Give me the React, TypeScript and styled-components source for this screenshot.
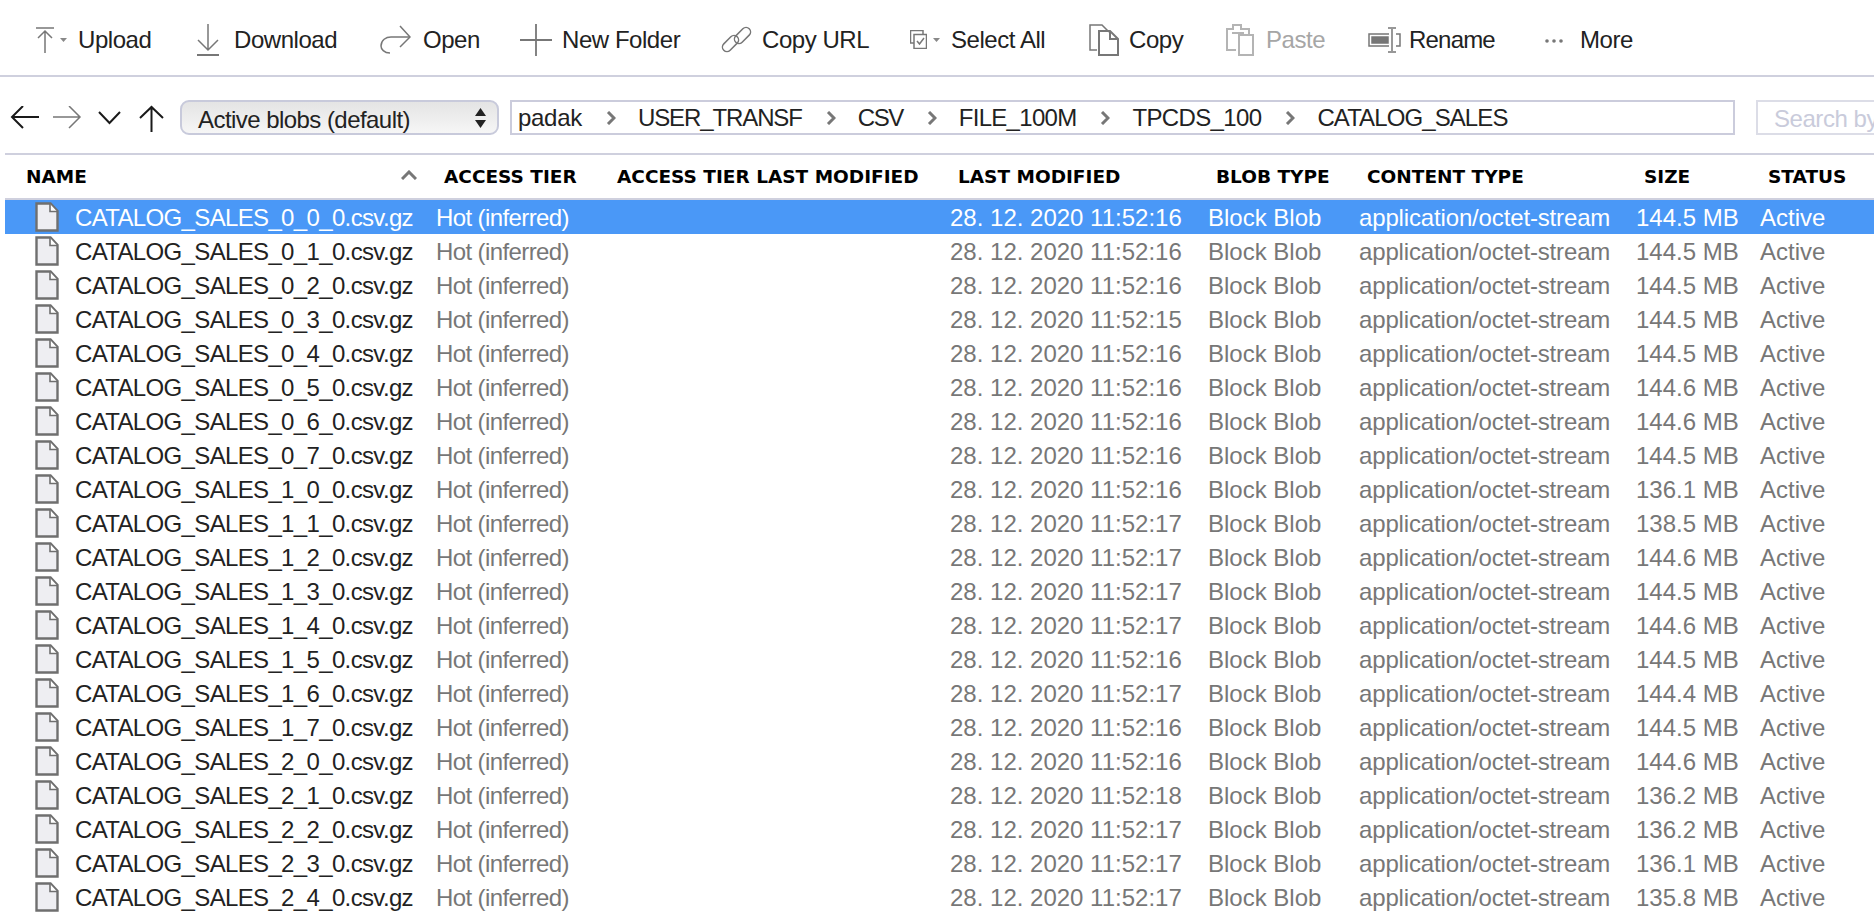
import React from 'react';
import styled, { createGlobalStyle } from 'styled-components';

const FONT = '"Liberation Sans", Arial, sans-serif';

const GlobalStyle = createGlobalStyle`
  html, body {
    margin: 0;
    padding: 0;
    height: 100%;
    overflow: hidden;
    background: #fff;
    font-family: ${FONT};
  }
`;

const Page = styled.div`
  width: 1874px;
  height: 914px;
  overflow: hidden;
  background: #fff;
  color: #222;
`;

const Toolbar = styled.div`
  height: 77px;
  box-sizing: border-box;
  padding: 4px 0 0 36px;
  display: flex;
  align-items: center;
  border-bottom: 2px solid #cfd0de;
`;

const Tool = styled.div<{ $width: number; $spacing?: number; $disabled?: boolean }>`
  flex: none;
  width: ${(p) => p.$width}px;
  display: flex;
  align-items: center;
  font-size: 24px;
  letter-spacing: ${(p) => p.$spacing ?? -0.45}px;
  white-space: nowrap;
  color: ${(p) => (p.$disabled ? '#a6a6a6' : '#222')};
`;

const IconSlot = styled.span<{ $width: number }>`
  flex: none;
  width: ${(p) => p.$width}px;
  height: 34px;
  display: flex;
  align-items: center;
`;

const NavRow = styled.div`
  height: 76px;
  box-sizing: border-box;
  padding: 23px 0 0 10px;
  display: flex;
  align-items: flex-start;
`;

const NavIcons = styled.div`
  flex: none;
  width: 170px;
  height: 35px;
  display: flex;
  align-items: center;
  gap: 14px;
`;

const BlobSelect = styled.div`
  flex: none;
  width: 319px;
  height: 35px;
  box-sizing: border-box;
  border: 2px solid #c8cadb;
  border-radius: 9px;
  background: linear-gradient(#e4e4e4, #f6f6f6);
  padding: 4px 11px 0 16px;
  display: flex;
  align-items: center;
  justify-content: space-between;
  font-size: 24px;
  letter-spacing: -0.55px;
  white-space: nowrap;
`;

const SelectCaret = styled.svg`
  display: block;
  flex: none;
  margin-top: -4px;
`;

const PathBar = styled.div`
  flex: none;
  width: 1225px;
  height: 35px;
  margin-left: 11px;
  box-sizing: border-box;
  border: 2px solid #cbccdc;
  padding: 1px 0 0 6px;
  display: flex;
  align-items: center;
  font-size: 24px;
  white-space: nowrap;
`;

const Crumb = styled.span<{ $spacing: number }>`
  letter-spacing: ${(p) => p.$spacing}px;
`;

const Chevron = styled.svg`
  flex: none;
  margin: 0 22px 0 24px;
  filter: blur(0.4px);
`;

const SearchBox = styled.div`
  flex: none;
  width: 160px;
  height: 35px;
  margin-left: 21px;
  box-sizing: border-box;
  border: 2px solid #dcdde7;
  padding: 2px 0 0 16px;
  display: flex;
  align-items: center;
  font-size: 24px;
  letter-spacing: -0.45px;
  color: #c9cbdb;
  white-space: nowrap;
`;

const Table = styled.div`
  margin-left: 5px;
`;

const COLUMNS = '423px 173px 341px 258px 151px 277px 124px 1fr';

const HeaderRow = styled.div`
  display: grid;
  grid-template-columns: ${COLUMNS};
  height: 47px;
  box-sizing: border-box;
  border-top: 2px solid #cfd0de;
  border-bottom: 2px solid #cfd0de;
  align-items: center;
`;

const HeaderCell = styled.div`
  padding-left: 16px;
  font-family: "DejaVu Sans", Verdana, sans-serif;
  font-weight: 700;
  font-size: 18.5px;
  color: #000;
  white-space: nowrap;
  position: relative;
  &:first-child {
    padding-left: 21px;
  }
`;

const SortCaret = styled.svg`
  position: absolute;
  left: 396px;
  top: 4px;
  filter: blur(0.4px);
`;

const Row = styled.div<{ $selected?: boolean }>`
  display: grid;
  grid-template-columns: ${COLUMNS};
  height: 34px;
  align-items: center;
  font-size: 24px;
  color: ${(p) => (p.$selected ? '#fff' : '#777')};
  background: ${(p) => (p.$selected ? '#4a98f7' : 'transparent')};
`;

const Cell = styled.div<{ $spacing?: number }>`
  padding: 2px 0 0 8px;
  white-space: nowrap;
  letter-spacing: ${(p) => p.$spacing ?? 0}px;
`;

const NameCell = styled.div<{ $selected?: boolean }>`
  display: flex;
  align-items: center;
  gap: 16px;
  padding-left: 30px;
  white-space: nowrap;
  letter-spacing: -0.65px;
  color: ${(p) => (p.$selected ? '#fff' : '#222')};
`;

const FileName = styled.span`
  padding-top: 2px;
`;

const Stroke = styled.svg`
  display: block;
  flex: none;
  fill: none;
  stroke: #777;
  stroke-width: 1.5;
`;

const DarkStroke = styled(Stroke)`
  stroke: #1a1a1a;
  stroke-width: 2;
`;

const FaintStroke = styled(Stroke)`
  stroke: #b4b4b4;
  stroke-width: 2;
`;

const MiniArrow = styled.svg`
  display: block;
  flex: none;
  margin-left: 6px;
  fill: #888;
`;

const PlainSvg = styled.svg`
  display: block;
  flex: none;
`;

const Dropdown = () => (
  <MiniArrow width="7" height="4" viewBox="0 0 7 4">
    <path d="M0 0h7L3.500 4z" />
  </MiniArrow>
);

const UploadIcon = () => (
  <>
    <Stroke width="18" height="26" viewBox="0 0 18 26">
      <path d="M0 1h18M9 26V4M2 11l7-7 7 7" />
    </Stroke>
    <Dropdown />
  </>
);

const DownloadIcon = () => (
  <Stroke width="22" height="32" viewBox="0 0 22 32">
    <path d="M11 0v26M1 16l10 10 10-10" />
    <path d="M0 31h22" strokeWidth="2" />
  </Stroke>
);

const OpenIcon = () => (
  <Stroke width="31" height="29" viewBox="0 0 31 29">
    <path d="M10 28C4 28 1 24 1 21c0-6 5-9 10-9h19" />
    <path d="M20 1l10 11-10 10" />
  </Stroke>
);

const PlusIcon = () => (
  <Stroke width="32" height="32" viewBox="0 0 32 32">
    <path d="M16 0v32M0 16h32" strokeWidth="1.800" />
  </Stroke>
);

const LinkIcon = () => (
  <Stroke width="31" height="31" viewBox="0 0 31 31">
    <rect x="12" y="7" width="19" height="9" rx="4.500" transform="rotate(-45 21.500 11.500)" />
    <rect x="0" y="15" width="19" height="9" rx="4.500" transform="rotate(-45 9.500 19.500)" />
  </Stroke>
);

const SelectAllIcon = () => (
  <>
    <Stroke width="17" height="19" viewBox="0 0 17 19" strokeWidth="1.100">
      <path d="M4 13H.5V.5H13V4" />
      <path d="M4 4.500h12.500v14H4z" />
      <path d="M7 11l2.500 3L14 8" />
    </Stroke>
    <Dropdown />
  </>
);

const CopyIcon = () => (
  <Stroke width="30" height="32" viewBox="0 0 30 32">
    <path d="M8 26H1V1h12l7 7" />
    <path d="M10 7h11l8 8v16H10zM21 7v8h8" strokeWidth="2" />
  </Stroke>
);

const PasteIcon = () => (
  <FaintStroke width="28" height="32" viewBox="0 0 28 32">
    <path d="M10 26H1V5h6V1h8v4h8v5" />
    <path d="M13 11h14v20H13z" />
    <path d="M6 9h12" />
  </FaintStroke>
);

const RenameIcon = () => (
  <Stroke width="33" height="26" viewBox="0 0 33 26">
    <path d="M21 7H1v12h20M28 7h4v12h-4" />
    <path d="M4 10h16v6H4z" fill="#777" />
    <path d="M24 2v22M20 1h8M20 25h8" />
  </Stroke>
);

const MoreIcon = () => (
  <PlainSvg width="18" height="6" viewBox="0 0 18 6" fill="#777">
    <circle cx="2" cy="4" r="1.800" />
    <circle cx="9" cy="4" r="1.800" />
    <circle cx="16" cy="4" r="1.800" />
  </PlainSvg>
);

const FileIcon = () => (
  <PlainSvg width="24" height="30" viewBox="0 0 24 30">
    <path
      d="M1.500 1.500h14l7 7.500v19.500h-21z"
      fill="#eeeef2"
      stroke="#6f6f6f"
      strokeWidth="2.400"
    />
    <path d="M15 2v7.500h7" fill="#fff" stroke="#6f6f6f" strokeWidth="1.600" />
  </PlainSvg>
);

const tools: {
  label: string;
  icon: React.ReactNode;
  slot: number;
  width: number;
  spacing?: number;
  disabled?: boolean;
}[] = [
  { label: 'Upload', icon: <UploadIcon />, slot: 42, width: 161 },
  { label: 'Download', icon: <DownloadIcon />, slot: 37, width: 183 },
  { label: 'Open', icon: <OpenIcon />, slot: 43, width: 140 },
  { label: 'New Folder', icon: <PlusIcon />, slot: 42, width: 201 },
  { label: 'Copy URL', icon: <LinkIcon />, slot: 41, width: 189 },
  { label: 'Select All', icon: <SelectAllIcon />, slot: 41, width: 179 },
  { label: 'Copy', icon: <CopyIcon />, slot: 40, width: 137 },
  { label: 'Paste', icon: <PasteIcon />, slot: 40, width: 142, disabled: true },
  { label: 'Rename', icon: <RenameIcon />, slot: 41, width: 177, spacing: -0.8 },
  { label: 'More', icon: <MoreIcon />, slot: 35, width: 60 },
];

const crumbs = [
  { label: 'padak', spacing: -0.3 },
  { label: 'USER_TRANSF', spacing: -1.1 },
  { label: 'CSV', spacing: -1.5 },
  { label: 'FILE_100M', spacing: -0.7 },
  { label: 'TPCDS_100', spacing: -0.65 },
  { label: 'CATALOG_SALES', spacing: -0.9 },
];

const headers = [
  'NAME',
  'ACCESS TIER',
  'ACCESS TIER LAST MODIFIED',
  'LAST MODIFIED',
  'BLOB TYPE',
  'CONTENT TYPE',
  'SIZE',
  'STATUS',
];

const files: [string, string, string][] = [
  ['0_0_0', '16', '144.5'],
  ['0_1_0', '16', '144.5'],
  ['0_2_0', '16', '144.5'],
  ['0_3_0', '15', '144.5'],
  ['0_4_0', '16', '144.5'],
  ['0_5_0', '16', '144.6'],
  ['0_6_0', '16', '144.6'],
  ['0_7_0', '16', '144.5'],
  ['1_0_0', '16', '136.1'],
  ['1_1_0', '17', '138.5'],
  ['1_2_0', '17', '144.6'],
  ['1_3_0', '17', '144.5'],
  ['1_4_0', '17', '144.6'],
  ['1_5_0', '16', '144.5'],
  ['1_6_0', '17', '144.4'],
  ['1_7_0', '16', '144.5'],
  ['2_0_0', '16', '144.6'],
  ['2_1_0', '18', '136.2'],
  ['2_2_0', '17', '136.2'],
  ['2_3_0', '17', '136.1'],
  ['2_4_0', '17', '135.8'],
];

export default function App() {
  return (
    <Page>
      <GlobalStyle />
      <Toolbar>
        {tools.map((t) => (
          <Tool key={t.label} $width={t.width} $spacing={t.spacing} $disabled={t.disabled}>
            <IconSlot $width={t.slot}>{t.icon}</IconSlot>
            {t.label}
          </Tool>
        ))}
      </Toolbar>
      <NavRow>
        <NavIcons>
          <DarkStroke width="29" height="24" viewBox="0 1 29 24">
            <path d="M29 12H2M13 1L2 12l11 11" />
          </DarkStroke>
          <Stroke width="29" height="24" viewBox="0 1 29 24" strokeWidth="2">
            <path d="M0 12h27M16 1l11 11-11 11" />
          </Stroke>
          <DarkStroke width="26" height="14" viewBox="-2 0 26 14" strokeWidth="1.600">
            <path d="M1 1l10.500 11L22 1" />
          </DarkStroke>
          <DarkStroke width="28" height="29" viewBox="-3 0 28 29">
            <path d="M12.500 29V4M1 15L12.500 4 24 15" />
          </DarkStroke>
        </NavIcons>
        <BlobSelect>
          Active blobs (default)
          <SelectCaret width="11" height="20" viewBox="0 0 11 20" fill="#222">
            <path d="M5.500 0L11 8H0zM0 12h11l-5.500 8z" />
          </SelectCaret>
        </BlobSelect>
        <PathBar>
          {crumbs.map((c, i) => (
            <React.Fragment key={c.label}>
              <Crumb $spacing={c.spacing}>{c.label}</Crumb>
              {i < crumbs.length - 1 && (
                <Chevron width="10" height="14" viewBox="0 0 10 14" fill="none" stroke="#777" strokeWidth="3">
                  <path d="M2 1l6 6-6 6" />
                </Chevron>
              )}
            </React.Fragment>
          ))}
        </PathBar>
        <SearchBox>Search by</SearchBox>
      </NavRow>
      <Table>
        <HeaderRow>
          {headers.map((h, i) => (
            <HeaderCell key={h}>
              {h}
              {i === 0 && (
                <SortCaret width="16" height="10" viewBox="0 0 16 10" fill="none" stroke="#777" strokeWidth="3">
                  <path d="M1 9l7-7 7 7" />
                </SortCaret>
              )}
            </HeaderCell>
          ))}
        </HeaderRow>
        {files.map(([part, sec, size], i) => (
          <Row key={part} $selected={i === 0}>
            <NameCell $selected={i === 0}>
              <FileIcon />
              <FileName>CATALOG_SALES_{part}.csv.gz</FileName>
            </NameCell>
            <Cell $spacing={-0.6}>Hot (inferred)</Cell>
            <Cell />
            <Cell>28. 12. 2020 11:52:{sec}</Cell>
            <Cell>Block Blob</Cell>
            <Cell $spacing={-0.15}>application/octet-stream</Cell>
            <Cell>{size} MB</Cell>
            <Cell>Active</Cell>
          </Row>
        ))}
      </Table>
    </Page>
  );
}
